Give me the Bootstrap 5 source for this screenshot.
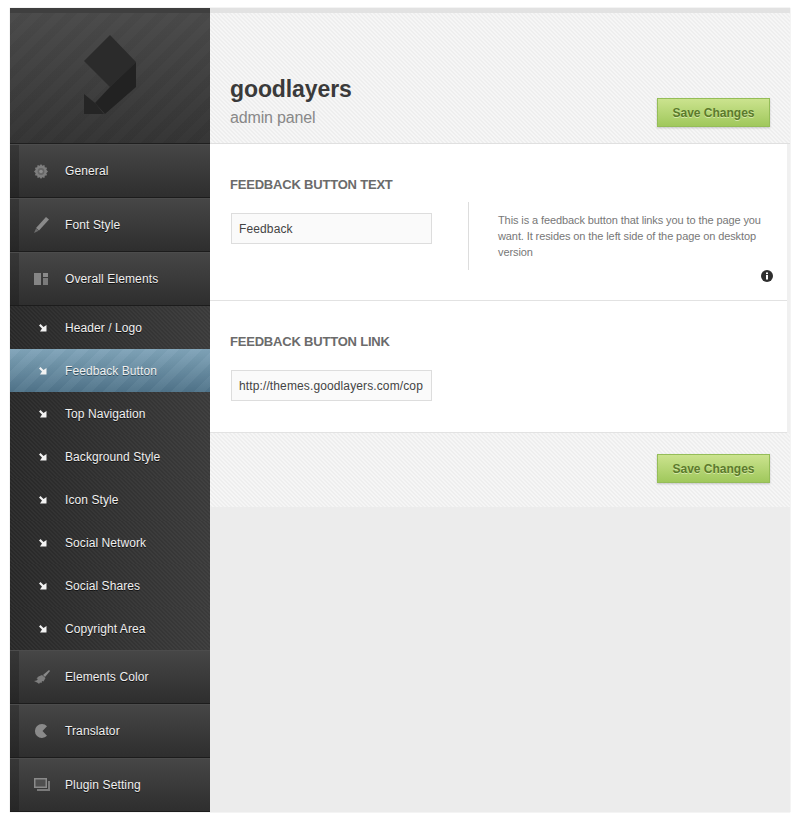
<!DOCTYPE html>
<html lang="en">
<head>
    <meta charset="UTF-8">
    <meta name="viewport" content="width=device-width, initial-scale=1.0">
    <title>goodlayers admin panel</title>
    <link href="https://cdn.jsdelivr.net/npm/bootstrap@5.3.0/dist/css/bootstrap.min.css" rel="stylesheet">
    <style>
        html, body { height: 100%; }
        body {
            background: #fff;
            font-family: "Liberation Sans", Arial, sans-serif;
            padding: 8px 9px 7px 10px;
        }
        .admin-frame { width: 780px; height: 804px; background: #ececec; box-shadow: 0 0 1px #bbb; }
        .side-col { width: 200px; flex: none; background: #2b2b2b; }
        .logo-box {
            height: 136px;
            border-top: 5px solid #3f3f3f;
            border-bottom: 1px solid #1f1f1f;
            background:
                repeating-linear-gradient(135deg, rgba(255,255,255,.012) 0 8px, rgba(0,0,0,.012) 8px 16px),
                linear-gradient(#4a4a4a, #343434);
        }
        .menu-main {
            height: 54px;
            padding-left: 9px;
            background: linear-gradient(#373737, #262626);
            border-top: 1px solid #4c4c4c;
            border-bottom: 1px solid #1c1c1c;
        }
        .menu-main-inner {
            height: 100%;
            background: linear-gradient(#464646, #2e2e2e);
            color: #f0f0f0;
            font-size: 12px;
            letter-spacing: .12px;
            text-shadow: 0 1px 0 #111;
        }
        .menu-icon { width: 46px; flex: none; padding-left: 15px; }
        .menu-sub {
            height: 43px;
            padding-left: 19px;
            color: #f0f0f0;
            font-size: 12px;
            letter-spacing: .08px;
            text-shadow: 0 1px 0 #111;
            background:
                linear-gradient(45deg, rgba(255,255,255,.035) 25%, transparent 25%, transparent 50%, rgba(255,255,255,.035) 50%, rgba(255,255,255,.035) 75%, transparent 75%) 0 0 / 4px 4px,
                linear-gradient(90deg, #282828, #3a3a3a);
        }
        .menu-sub-active {
            background:
                repeating-linear-gradient(135deg, rgba(255,255,255,.035) 0 8px, rgba(0,0,0,.015) 8px 16px),
                linear-gradient(#80a4b9, #4f7389);
            text-shadow: 0 1px 0 #33505f;
        }
        .sub-arrow { width: 36px; flex: none; padding-left: 10px; }
        .main-col { flex: 1 1 auto; }
        .stripe-bg {
            background: #eee linear-gradient(45deg, #f6f6f6 25%, #eeeeee 25%, #eeeeee 50%, #f6f6f6 50%, #f6f6f6 75%, #eeeeee 75%) 0 0 / 4px 4px;
        }
        .head-box {
            height: 136px;
            border-top: 5px solid #e2e2e2;
            border-bottom: 1px solid #e0e0e0;
            padding: 0 20px 16px 20px;
        }
        .head-title { font-size: 23px; font-weight: 700; color: #3a3a3a; line-height: 28px; margin-bottom: 5px; letter-spacing: -.1px; }
        .head-sub { font-size: 16px; color: #888; line-height: 19px; letter-spacing: -.15px; }
        .save-btn {
            width: 113px;
            height: 29px;
            padding: 0;
            border: 1px solid #95bd58;
            border-radius: 0;
            background: linear-gradient(#cbe38e, #a0c85c);
            color: #5b7a2c;
            font-size: 12px;
            font-weight: 700;
            text-shadow: 0 1px 0 #d5e9a6;
            box-shadow: 0 1px 2px rgba(0,0,0,.2);
        }
        .save-btn:hover { background: linear-gradient(#cbe38e, #a0c85c); color: #5b7a2c; border-color: #95bd58; }
        .content-box { border-right: 3px solid #f0f0f0; background: #fff; }
        .opt-block { padding: 33px 20px 0 20px; border-bottom: 1px solid #e2e2e2; }
        .opt-first { height: 157px; }
        .opt-second { height: 132px; }
        .opt-title { font-size: 13px; font-weight: 700; color: #6b6b6b; line-height: 15px; margin-bottom: 10px; letter-spacing: -.2px; }
        .opt-input {
            width: 201px;
            height: 31px;
            flex: none;
            margin: 11px 0 0 1px;
            padding: 0 7px;
            border: 1px solid #ddd;
            border-radius: 0;
            background: #fafafa;
            color: #444;
            font-size: 12px;
            letter-spacing: .12px;
        }
        .opt-input:focus { background: #fafafa; border-color: #ddd; box-shadow: none; }
        .opt-desc {
            width: 296px;
            height: 68px;
            margin-left: 36px;
            padding: 10px 0 0 29px;
            border-left: 1px solid #ddd;
            color: #777;
            font-size: 11px;
            line-height: 16px;
            letter-spacing: -.1px;
        }
        .foot-box { height: 74px; padding: 21px 20px 0 0; }
        .info-dot { right: 14px; bottom: 18px; }
    </style>
</head>
<body>
    <div class="admin-frame d-flex">
        <div class="side-col">
            <div class="logo-box d-flex align-items-center justify-content-center">
                <svg width="52" height="79" viewBox="0 0 52 79" class="mb-2">
                    <polygon points="26,0 52,27 26,52 0,26" fill="#2b2b2b"/>
                    <polygon points="52,27 52,52 21,79 11,68 26,52" fill="#222"/>
                    <polygon points="0,59 11,68 20,79 0,79" fill="#252525"/>
                </svg>
            </div>

            <div class="menu-main"><div class="menu-main-inner d-flex align-items-center">
                <div class="menu-icon d-flex">
                    <svg width="14" height="15" viewBox="0 0 14 15"><path d="M7 0l1.300 1.800 2.100-.8.400 2.300 2.300.4-.8 2 1.700 1.800-1.700 1.800.8 2-2.300.4-.4 2.300-2.100-.8L7 15l-1.300-1.800-2.100.8-.4-2.300-2.300-.4.8-2L0 7.500l1.700-1.800-.8-2 2.300-.4.400-2.300 2.100.8z" fill="#7e7e7e"/><circle cx="7" cy="7.500" r="3.400" fill="#666"/><circle cx="7" cy="7.500" r="1.800" fill="#8e8e8e"/></svg>
                </div>
                General
            </div></div>
            <div class="menu-main"><div class="menu-main-inner d-flex align-items-center">
                <div class="menu-icon d-flex">
                    <svg width="15" height="16" viewBox="0 0 15 16"><path d="M12 0l3 2.500L5 13.500 2 11z" fill="#8a8a8a"/><path d="M2 11.500l2.600 2.300L0 16z" fill="#6e6e6e"/></svg>
                </div>
                Font Style
            </div></div>
            <div class="menu-main"><div class="menu-main-inner d-flex align-items-center">
                <div class="menu-icon d-flex">
                    <svg width="14" height="12" viewBox="0 0 14 12"><rect width="7" height="12" fill="#858585"/><rect x="9" width="5" height="4" fill="#8a8a8a"/><rect x="9" y="5" width="5" height="7" fill="#7a7a7a"/></svg>
                </div>
                Overall Elements
            </div></div>

            <div>
                <div class="menu-sub d-flex align-items-center"><div class="sub-arrow d-flex"><svg width="8" height="8" viewBox="0 0 8 8"><path d="M0 1.500L1.500 0l3 3 3-2v6.500H1l2-3z" fill="#f2f2f2"/></svg></div>Header / Logo</div>
                <div class="menu-sub menu-sub-active d-flex align-items-center"><div class="sub-arrow d-flex"><svg width="8" height="8" viewBox="0 0 8 8"><path d="M0 1.500L1.500 0l3 3 3-2v6.500H1l2-3z" fill="#f2f2f2"/></svg></div>Feedback Button</div>
                <div class="menu-sub d-flex align-items-center"><div class="sub-arrow d-flex"><svg width="8" height="8" viewBox="0 0 8 8"><path d="M0 1.500L1.500 0l3 3 3-2v6.500H1l2-3z" fill="#f2f2f2"/></svg></div>Top Navigation</div>
                <div class="menu-sub d-flex align-items-center"><div class="sub-arrow d-flex"><svg width="8" height="8" viewBox="0 0 8 8"><path d="M0 1.500L1.500 0l3 3 3-2v6.500H1l2-3z" fill="#f2f2f2"/></svg></div>Background Style</div>
                <div class="menu-sub d-flex align-items-center"><div class="sub-arrow d-flex"><svg width="8" height="8" viewBox="0 0 8 8"><path d="M0 1.500L1.500 0l3 3 3-2v6.500H1l2-3z" fill="#f2f2f2"/></svg></div>Icon Style</div>
                <div class="menu-sub d-flex align-items-center"><div class="sub-arrow d-flex"><svg width="8" height="8" viewBox="0 0 8 8"><path d="M0 1.500L1.500 0l3 3 3-2v6.500H1l2-3z" fill="#f2f2f2"/></svg></div>Social Network</div>
                <div class="menu-sub d-flex align-items-center"><div class="sub-arrow d-flex"><svg width="8" height="8" viewBox="0 0 8 8"><path d="M0 1.500L1.500 0l3 3 3-2v6.500H1l2-3z" fill="#f2f2f2"/></svg></div>Social Shares</div>
                <div class="menu-sub d-flex align-items-center"><div class="sub-arrow d-flex"><svg width="8" height="8" viewBox="0 0 8 8"><path d="M0 1.500L1.500 0l3 3 3-2v6.500H1l2-3z" fill="#f2f2f2"/></svg></div>Copyright Area</div>
            </div>

            <div class="menu-main"><div class="menu-main-inner d-flex align-items-center">
                <div class="menu-icon d-flex">
                    <svg width="16" height="15" viewBox="0 0 16 15"><path d="M15 0l1 1-5 6-2-2z" fill="#8a8a8a"/><path d="M8 5l3.500 3-2 3.500-1.500-.5-.5 2-1.500-.5-1 1.500-1-1L0 11l2.500-.5L4 9l-1.500-.5 2-2z" fill="#7e7e7e"/></svg>
                </div>
                Elements Color
            </div></div>
            <div class="menu-main"><div class="menu-main-inner d-flex align-items-center">
                <div class="menu-icon d-flex">
                    <svg width="14" height="14" viewBox="0 0 14 14"><path d="M13 2.200A7 7 0 1 0 13 11.800L8.500 7z" fill="#8a8a8a"/></svg>
                </div>
                Translator
            </div></div>
            <div class="menu-main"><div class="menu-main-inner d-flex align-items-center">
                <div class="menu-icon d-flex">
                    <svg width="16" height="14" viewBox="0 0 16 14"><rect width="13" height="10" fill="#8a8a8a"/><rect x="1.500" y="1.500" width="10" height="7" fill="#4f4f4f"/><path d="M14 3h2v10H3v-2h11z" fill="#7a7a7a"/></svg>
                </div>
                Plugin Setting
            </div></div>
        </div>

        <div class="main-col">
            <div class="head-box stripe-bg d-flex justify-content-between align-items-end">
                <div>
                    <h1 class="head-title">goodlayers</h1>
                    <div class="head-sub">admin panel</div>
                </div>
                <button type="button" class="btn save-btn">Save Changes</button>
            </div>

            <div class="content-box">
                <div class="opt-block opt-first position-relative">
                    <h2 class="opt-title">FEEDBACK BUTTON TEXT</h2>
                    <div class="d-flex align-items-start">
                        <input type="text" class="form-control opt-input" value="Feedback">
                        <div class="opt-desc">This is a feedback button that links you to the page you want. It resides on the left side of the page on desktop version</div>
                    </div>
                    <svg class="info-dot position-absolute" width="12" height="12" viewBox="0 0 12 12"><circle cx="6" cy="6" r="6" fill="#2e2e2e"/><rect x="5" y="5" width="2" height="4.500" fill="#fff"/><rect x="5" y="2.500" width="2" height="1.600" fill="#fff"/></svg>
                </div>
                <div class="opt-block opt-second">
                    <h2 class="opt-title">FEEDBACK BUTTON LINK</h2>
                    <div class="d-flex align-items-start">
                        <input type="text" class="form-control opt-input" value="http://themes.goodlayers.com/cop">
                    </div>
                </div>
            </div>

            <div class="foot-box stripe-bg d-flex justify-content-end align-items-start">
                <button type="button" class="btn save-btn">Save Changes</button>
            </div>
        </div>
    </div>

    <script src="https://cdn.jsdelivr.net/npm/bootstrap@5.3.0/dist/js/bootstrap.bundle.min.js"></script>
</body>
</html>
